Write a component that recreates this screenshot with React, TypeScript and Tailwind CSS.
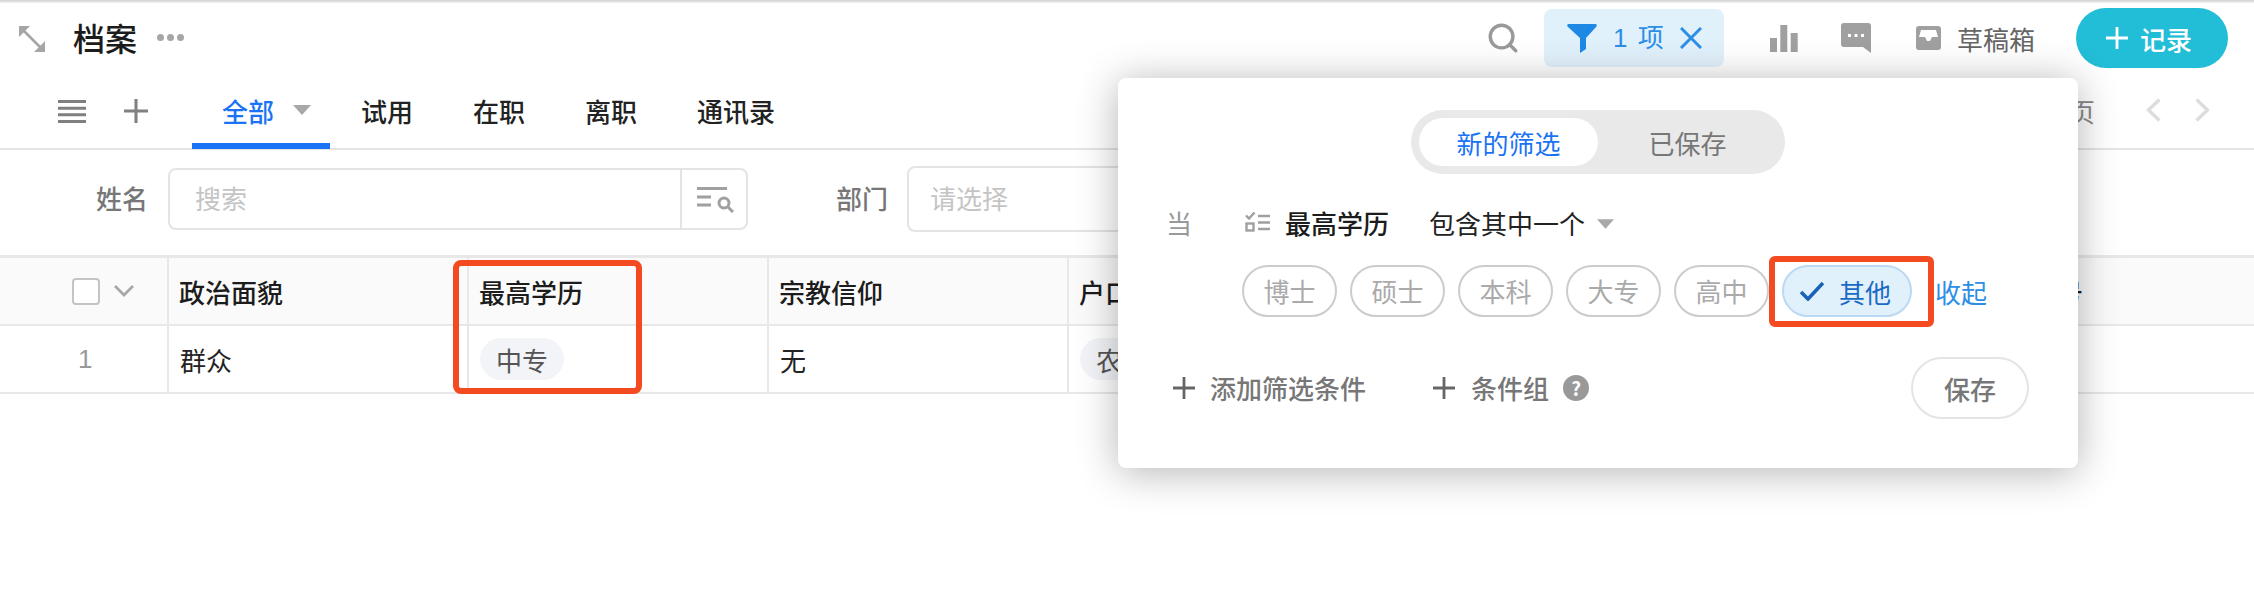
import { Search } from 'lucide-react';

const headers = ['政治面貌', '最高学历', '宗教信仰', '户口类型', '', '', '身份证号'];

function Caret({ className }: { className: string }) {
  return (
    <svg viewBox="0 0 18 10" className={className} fill="currentColor">
      <path d="M0 0h18L9 10z" />
    </svg>
  );
}

function PlusIcon({ className }: { className: string }) {
  return (
    <svg viewBox="0 0 22 22" className={className} fill="none" stroke="currentColor" strokeWidth="2.8">
      <path d="M11 0v22M0 11h22" />
    </svg>
  );
}

function Chip({ label }: { label: string }) {
  return (
    <span className="flex h-[52px] w-[95px] items-center justify-center rounded-full border-2 border-[#cccccc] pb-[2px] text-[26px] text-[#aaaaaa]">
      {label}
    </span>
  );
}

function FilterPanel() {
  return (
    <div className="absolute left-[1118px] top-[78px] h-[390px] w-[960px] rounded-lg bg-white shadow-[0_4px_40px_rgba(0,0,0,0.3)]">
      <div className="flex justify-center pt-8">
        <div className="flex h-16 w-[374px] items-center rounded-full bg-[#e9e9e9] px-2">
          <div className="flex h-12 w-[179px] items-center justify-center rounded-full bg-white text-[26px] text-[#1a73f5]">新的筛选</div>
          <div className="flex-1 text-center text-[26px] text-[#777777]">已保存</div>
        </div>
      </div>
      <div className="mt-[28px] flex h-10 items-center pl-[48px]">
        <span className="w-[79px] text-[26px] text-[#999999]">当</span>
        <svg viewBox="0 0 25 20" className="h-[20px] w-[25px] text-[#a0a0a0]" fill="none" stroke="currentColor" strokeWidth="2.4">
          <path d="M1 3.500l3 3 5.500-6M13 4h12M13 10.500h12M13 17h12" />
          <rect x="1.500" y="11.500" width="7" height="7" />
        </svg>
        <span className="ml-[15px] text-[26px] font-medium text-[#1c1c1c]">最高学历</span>
        <span className="ml-[40px] text-[26px] text-[#222222]">包含其中一个</span>
        <Caret className="ml-[12px] mt-1 h-[10px] w-[17px] text-[#a8a8a8]" />
      </div>
      <div className="mt-[23px] flex items-center gap-[13px] pl-[124px]">
        <Chip label="博士" />
        <Chip label="硕士" />
        <Chip label="本科" />
        <Chip label="大专" />
        <Chip label="高中" />
        <span className="flex h-[52px] w-[130px] items-center gap-[15px] rounded-full border-2 border-[#bcd9f3] bg-[#e1f1fc] pl-[16px] text-[26px] text-[#1a6ac4]">
          <svg viewBox="0 0 24 20" className="h-[20px] w-[24px] text-[#1a62b8]" fill="none" stroke="currentColor" strokeWidth="3.6">
            <path d="M1 11l7 7L23 2" />
          </svg>
          其他
        </span>
        <span className="ml-[10px] text-[26px] text-[#2d8ee6]">收起</span>
      </div>
      <div className="mt-[40px] flex items-center pl-[55px] text-[26px] font-medium text-[#777777]">
        <PlusIcon className="h-[22px] w-[22px] text-[#666666]" />
        <span className="mb-[2px] ml-[15px]">添加筛选条件</span>
        <PlusIcon className="ml-[67px] h-[22px] w-[22px] text-[#666666]" />
        <span className="mb-[2px] ml-[16px]">条件组</span>
        <span className="ml-[14px] flex h-[26px] w-[26px] items-center justify-center rounded-full bg-[#999999] text-[19px] font-bold text-white">?</span>
        <span className="ml-[322px] flex h-[62px] w-[118px] items-center justify-center rounded-full border-2 border-[#e4e4e4] font-medium text-[#777777]">保存</span>
      </div>
    </div>
  );
}

export default function App() {
  return (
    <div className="relative h-[592px] w-[2254px] overflow-hidden bg-white font-['Noto_Sans_CJK_SC',sans-serif]">
      <div className="h-[3px] bg-gradient-to-b from-[#d0d0d0] to-[#f4f4f4]" />

      {/* header */}
      <div className="flex h-[70px] items-center pl-[19px]">
        <svg viewBox="0 0 26 26" className="mt-[2px] h-[26px] w-[26px] text-[#a6a6a6]" fill="currentColor">
          <path d="M0 0h11L0 11zM26 26H15l11-11z" />
          <path d="M4 4l18 18" stroke="currentColor" strokeWidth="2.6" />
        </svg>
        <span className="mb-[3px] ml-[28px] text-[32px] font-medium text-[#1c1c1c]">档案</span>
        <span className="mb-[2px] ml-[20px] flex gap-[3px]">
          <span className="h-[7px] w-[7px] rounded-full bg-[#a6a6a6]" />
          <span className="h-[7px] w-[7px] rounded-full bg-[#a6a6a6]" />
          <span className="h-[7px] w-[7px] rounded-full bg-[#a6a6a6]" />
        </span>
        <Search size={34} strokeWidth={2.4} className="ml-[1302px] text-[#999999]" />
        <div className="ml-[24px] flex h-[58px] w-[180px] items-center rounded-lg bg-[#e1f1fc] pl-[23px] text-[#2d8ee6]">
          <svg viewBox="0 0 30 29" className="h-[29px] w-[30px] text-[#1e88e5]" fill="currentColor">
            <path d="M2 0h26q2.500 0 1.500 2.500L19 14v11l-6 4V14L.500 2.500Q-.500 0 2 0z" />
          </svg>
          <span className="ml-[16px] font-['Liberation_Sans','Noto_Sans_CJK_SC',sans-serif] text-[26px] [word-spacing:3px]">1 项</span>
          <svg viewBox="0 0 22 22" className="ml-[16px] h-[22px] w-[22px]" fill="none" stroke="currentColor" strokeWidth="3">
            <path d="M1 1l20 20M21 1L1 21" />
          </svg>
        </div>
        <svg viewBox="0 0 28 27" className="ml-[46px] h-[27px] w-[28px] text-[#a0a0a0]" fill="currentColor">
          <path d="M0 13h7v14H0zM10.300 0h7v27h-7zM20.700 8h7v19h-7z" />
        </svg>
        <svg viewBox="0 0 30 30" className="ml-[43px] h-[30px] w-[30px] text-[#a0a0a0]" fill="currentColor">
          <path fillRule="evenodd" d="M3 0h24a3 3 0 0 1 3 3v27l-8-6H3a3 3 0 0 1-3-3V3a3 3 0 0 1 3-3zM7 11h3v3H7zM13.500 11h3v3h-3zM20 11h3v3h-3z" />
        </svg>
        <svg viewBox="0 0 27 24" className="ml-[44px] h-[24px] w-[27px] text-[#a0a0a0]" fill="currentColor">
          <path fillRule="evenodd" d="M4 0h19a3 3 0 0 1 3 3v18a3 3 0 0 1-3 3H4a3 3 0 0 1-3-3V3a3 3 0 0 1 3-3zM6 4L4 11h6l2 4h3l2-4h6l-2-7z" />
        </svg>
        <span className="ml-[15px] text-[26px] text-[#666666]">草稿箱</span>
        <button className="ml-[41px] flex h-[60px] w-[152px] items-center gap-[12px] rounded-full bg-[#22bdd6] pl-[30px] text-[26px] font-medium text-white">
          <PlusIcon className="h-[22px] w-[22px]" />
          记录
        </button>
      </div>

      {/* tabs */}
      <div className="mt-[8px] flex h-[69px] items-center border-b-2 border-[#e4e4e4] pb-[9px] pl-[58px]">
        <svg viewBox="0 0 28 23" className="mt-[2px] h-[23px] w-[28px] text-[#808080]" fill="currentColor">
          <path d="M0 0h28v3H0zM0 6.700h28v3H0zM0 13.300h28v3H0zM0 20h28v3H0z" />
        </svg>
        <PlusIcon className="ml-[38px] mt-[2px] h-[24px] w-[24px] text-[#808080]" />
        <div className="relative ml-[44px] flex h-full w-[138px] items-center pl-[30px] text-[26px] font-medium text-[#1a73f5]">
          全部
          <Caret className="ml-[19px] h-[10px] w-[18px] text-[#a8a8a8]" />
          <span className="absolute bottom-[-10px] left-0 h-[6px] w-full bg-[#1a73f5]" />
        </div>
        <div className="ml-[31px] flex gap-[60px] text-[26px] font-medium text-[#222222]">
          <span>试用</span>
          <span>在职</span>
          <span>离职</span>
          <span>通讯录</span>
        </div>
        <span className="ml-[1294px] text-[26px] text-[#888888]">页</span>
        <svg viewBox="0 0 15 24" className="ml-[51px] h-[24px] w-[15px] text-[#dddddd]" fill="none" stroke="currentColor" strokeWidth="3.4">
          <path d="M13.500 1.500L2.500 12l11 10.500" />
        </svg>
        <svg viewBox="0 0 15 24" className="ml-[34px] h-[24px] w-[15px] text-[#dddddd]" fill="none" stroke="currentColor" strokeWidth="3.4">
          <path d="M1.500 1.500L12.500 12l-11 10.500" />
        </svg>
      </div>

      {/* filter bar */}
      <div className="flex h-[108px] items-center border-b-[3px] border-[#e8e8e8] pb-[7px]">
        <span className="mb-[3px] ml-[96px] text-[26px] font-medium text-[#777777]">姓名</span>
        <div className="ml-[20px] flex h-[62px] w-[580px] items-center rounded-lg border-2 border-[#e4e4e4]">
          <span className="mb-[3px] flex-1 pl-[25px] text-[26px] text-[#c4c4c4]">搜索</span>
          <div className="flex h-full w-[66px] items-center border-l-2 border-[#e4e4e4] pl-[15px]">
            <svg viewBox="0 0 38 27" className="h-[27px] w-[38px] text-[#a0a0a0]" fill="none" stroke="currentColor" strokeWidth="3">
              <path d="M0 2.500h30M0 11h14M0 19h14" />
              <circle cx="27" cy="17" r="5" />
              <path d="M31 21l5 5" />
            </svg>
          </div>
        </div>
        <span className="mb-[3px] ml-[88px] text-[26px] font-medium text-[#777777]">部门</span>
        <div className="ml-[19px] flex h-[66px] w-[300px] items-center rounded-l-lg border-2 border-[#e4e4e4] pb-[3px] pl-[21px] text-[26px] text-[#c4c4c4]">请选择</div>
      </div>

      {/* table */}
      <div className="flex h-[68px] border-b-2 border-[#e8e8e8] bg-[#fafafa]">
        <div className="flex w-[167px] shrink-0 items-center pl-[72px]">
          <span className="h-[27px] w-[28px] rounded border-2 border-[#c4c4c4] bg-white" />
          <svg viewBox="0 0 20 12" className="ml-[14px] h-[12px] w-[20px] text-[#a8a8a8]" fill="none" stroke="currentColor" strokeWidth="2.8">
            <path d="M1 1l9 9 9-9" />
          </svg>
        </div>
        {headers.map((h, i) => (
          <div key={i} className="flex w-[300px] shrink-0 items-center border-l-2 border-[#e8e8e8] pl-[10px] text-[26px] font-medium text-[#1c1c1c]">
            {h}
          </div>
        ))}
      </div>
      <div className="flex h-[68px] border-b-2 border-[#e8e8e8] text-[26px] text-[#222222]">
        <div className="flex w-[167px] shrink-0 items-center pl-[78px] font-['Liberation_Sans',sans-serif] text-[#999999]">1</div>
        <div className="flex w-[300px] shrink-0 items-center border-l-2 border-[#e8e8e8] pl-[11px]">群众</div>
        <div className="flex w-[300px] shrink-0 items-center border-l-2 border-[#e8e8e8] pl-[11px]">
          <span className="flex h-[42px] w-[84px] items-center justify-center rounded-full bg-[#f3f4f8] text-[#555555]">中专</span>
        </div>
        <div className="flex w-[300px] shrink-0 items-center border-l-2 border-[#e8e8e8] pl-[11px]">无</div>
        <div className="flex w-[300px] shrink-0 items-center border-l-2 border-[#e8e8e8] pl-[11px]">
          <span className="flex h-[42px] w-[84px] items-center justify-center rounded-full bg-[#f3f4f8] text-[#555555]">农业</span>
        </div>
      </div>

      <FilterPanel />

      {/* red annotation boxes */}
      <div className="absolute left-[453px] top-[260px] h-[134px] w-[189px] rounded-lg border-[6px] border-[#f44a22]" />
      <div className="absolute left-[1769px] top-[256px] h-[71px] w-[165px] rounded-md border-[6px] border-[#f44a22]" />
    </div>
  );
}
